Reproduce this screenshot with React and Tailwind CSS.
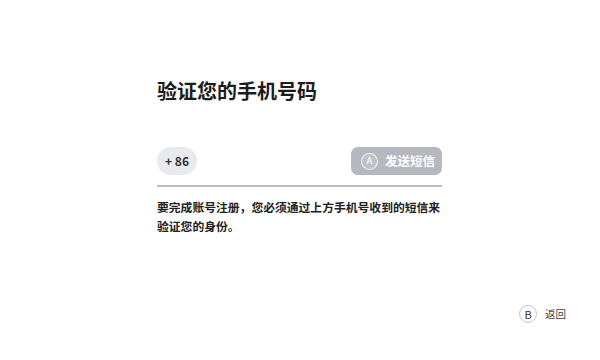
import React from "react";

const font = { fontFamily: '"Noto Sans CJK SC", "Noto Sans", sans-serif' };

function Hint({ letter, label }) {
  return (
    <div className="flex items-center gap-[8px]">
      <span className="flex h-[18px] w-[18px] items-center justify-center rounded-full border border-[#c4c4c4] text-[11px] leading-none text-[#333]">
        {letter}
      </span>
      <span className="text-[10.5px] text-[#444]">{label}</span>
    </div>
  );
}

export default function App() {
  return (
    <div
      className="flex h-[360px] w-[600px] flex-col bg-white text-[#1c1c1c]"
      style={font}
    >
      <div className="flex-1 pl-[157px] pt-[77px]">
        <div className="w-[285px]">
          <h1 className="text-[20px] font-bold leading-[28px]">验证您的手机号码</h1>

          <div className="mt-[42px] flex h-[28px] items-center justify-between">
            <div className="flex h-[28px] w-[40px] items-center justify-center rounded-full bg-[#e9eaee] text-[12px] font-bold text-[#333]">
              + 86
            </div>
            <button
              type="button"
              className="flex h-[28px] w-[91px] items-center gap-[7px] rounded-[7px] bg-[#b5b8bf] pl-[10px] text-white"
            >
              <span className="flex h-[17px] w-[17px] items-center justify-center rounded-full border border-white/80 bg-white/15 text-[9.5px] leading-none">
                A
              </span>
              <span className="text-[12.5px] font-bold">发送短信</span>
            </button>
          </div>

          <div className="mt-[10px] h-[2px] bg-[#bdbdbd]" />

          <p className="mt-[10px] text-[11.8px] font-bold leading-[19px] text-[#222]">
            要完成账号注册，您必须通过上方手机号收到的短信来验证您的身份。
          </p>
        </div>
      </div>

      <div className="flex justify-end pb-[37px] pr-[34px]">
        <Hint letter="B" label="返回" />
      </div>
    </div>
  );
}
